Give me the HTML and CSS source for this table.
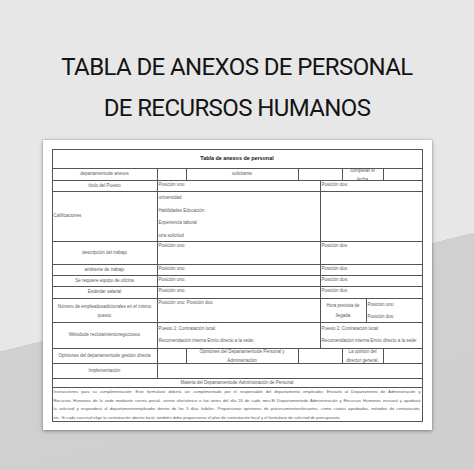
FILE: index.html
```html
<!DOCTYPE html>
<html lang="es">
<head>
<meta charset="utf-8">
<title>Tabla de anexos de personal</title>
<link rel="stylesheet" href="styles.css">
</head>
<body>
<header class="hero">
  <h1 class="hero-title">TABLA DE ANEXOS DE PERSONAL<br>DE RECURSOS HUMANOS</h1>
</header>
<main class="paper">
  <div class="sheet">
    <div class="cell span-8 sheet-title">Tabla de anexos de personal</div>

    <div class="cell">departamentode anexos</div>
    <div class="cell"></div>
    <div class="cell">solicitante</div>
    <div class="cell span-2"></div>
    <div class="cell span-2 tight">completar el<br>fecha</div>
    <div class="cell"></div>

    <div class="cell">título del Puesto</div>
    <div class="cell span-3 top">Posición uno:</div>
    <div class="cell span-4 top">Posición dos:</div>

    <div class="cell left">Calificaciones</div>
    <div class="cell span-3 list">
      <span>universidad</span>
      <span>Habilidades Educación</span>
      <span>Experiencia laboral</span>
      <span>otra solicitud</span>
    </div>
    <div class="cell span-4"></div>

    <div class="cell">descripción del trabajo</div>
    <div class="cell span-3 top">Posición uno:</div>
    <div class="cell span-4 top">Posición dos:</div>

    <div class="cell">ambiente de trabajo</div>
    <div class="cell span-3 top">Posición uno:</div>
    <div class="cell span-4 top">Posición dos:</div>

    <div class="cell">Se requiere equipo de oficina</div>
    <div class="cell span-3 top">Posición uno:</div>
    <div class="cell span-4 top">Posición dos:</div>

    <div class="cell">Estándar salarial</div>
    <div class="cell span-3 top">Posición uno:</div>
    <div class="cell span-4 top">Posición dos:</div>

    <div class="cell tight">Número de empleadosadicionales en el mismo<br>puesto</div>
    <div class="cell span-3 top">Posición uno: Posición dos:</div>
    <div class="cell span-2 mid">Hora prevista de<br>llegada</div>
    <div class="cell span-2 top lines">Posición uno:<br>Posición dos:</div>

    <div class="cell">Métodode reclutamientonegociosos</div>
    <div class="cell span-3 top lines">Puesto 1: Contratación local:<br>Recomendación interna Envío directo a la sede:</div>
    <div class="cell span-4 top lines">Puesto 2: Contratación local:<br>Recomendación interna Envío directo a la sede:</div>

    <div class="cell">Opiniones del departamentode gestión directa</div>
    <div class="cell"></div>
    <div class="cell tight">Opiniones del Departamentode Personal y<br>Administración</div>
    <div class="cell span-2"></div>
    <div class="cell span-2 tight">La opinión del<br>director general.</div>
    <div class="cell"></div>

    <div class="cell">Implementación</div>
    <div class="cell span-7"></div>

    <div class="cell span-8">Materia del Departamentode Administración de Personal</div>

    <div class="cell span-8 notes">
      <p class="note-line">Instrucciones para su cumplimentación: Este formulario deberá ser cumplimentado por el responsable del departamento empleador. Enviarlo al Departamento de Administración y</p>
      <p class="note-line">Recursos Humanos de la sede mediante correo postal, correo electrónico o fax antes del día 20 de cada mes.El Departamentode Administración y Recursos Humanos revisará y aprobará</p>
      <p class="note-line">la solicitud y responderá al departamentoempleador dentro de los 5 días hábiles. Proporcionar opiniones de procesamientorelevantes, como cuotas aprobadas, métodos de contratación,</p>
      <p class="note-line last">etc. Si cada sucursal elige la contratación abierta local, también debe proporcionar el plan de contratación local y el formulario de solicitud de presupuesto.</p>
    </div>
  </div>
</main>
</body>
</html>
```

FILE: styles.css
```css
html, body {
  margin: 0;
  padding: 0;
}

body {
  width: 474px;
  height: 470px;
  overflow: hidden;
  background: linear-gradient(165.9deg, #e7e7e7 0, #e7e7e7 341px, #d0d0d0 341px, #cfcfcf 100%);
  font-family: "Open Sans", "Liberation Sans", sans-serif;
}

.hero {
  padding-top: 47px;
  height: 82px;
  text-align: center;
}

.hero-title {
  margin: 0;
  font-family: Roboto, "Liberation Sans", sans-serif;
  font-weight: 400;
  font-size: 24px;
  line-height: 41px;
  letter-spacing: -0.6px;
  color: #141414;
}

.paper {
  width: 371px;
  margin: 11px auto 0;
  padding: 9px 9px 8px;
  background: #fff;
  box-shadow: 0 0 0 1px rgba(0, 0, 0, 0.06), 0 1px 4px rgba(0, 0, 0, 0.35);
}

.sheet {
  display: grid;
  grid-template-columns: 104px 28px 111px 21px 21px 23px 16px 38px;
  grid-template-rows: 18px 11px 10px 49px 22px 10px 10px 11px 23px 25px 14px 14px 8px 33px;
  gap: 1px;
  padding: 1px;
  background: #555;
  font-family: "Liberation Sans", Arial, sans-serif;
  font-size: 4.5px;
  line-height: 1;
  color: #5a5a5a;
}

.cell {
  background: #fff;
  display: flex;
  align-items: center;
  justify-content: center;
  text-align: center;
  padding: 0 1px;
  overflow: hidden;
  white-space: nowrap;
}

.span-2 { grid-column: span 2; }
.span-3 { grid-column: span 3; }
.span-4 { grid-column: span 4; }
.span-7 { grid-column: span 7; }
.span-8 { grid-column: span 8; }

.sheet-title {
  font-weight: 700;
  font-size: 5.4px;
  color: #111;
}

.left {
  justify-content: flex-start;
  text-align: left;
}

.top {
  align-items: flex-start;
  justify-content: flex-start;
  text-align: left;
  padding-top: 2px;
}

.lines {
  padding-top: 0;
  line-height: 12px;
}

.tight {
  line-height: 9px;
}

.mid {
  line-height: 10px;
}

.list {
  flex-direction: column;
  align-items: flex-start;
  justify-content: flex-start;
  text-align: left;
}

.list span {
  display: block;
  line-height: 12.5px;
}

.notes {
  display: block;
  padding: 0 1px;
  white-space: normal;
  font-size: 4.2px;
}

.note-line {
  margin: 0;
  line-height: 8.7px;
  text-align: justify;
  text-align-last: justify;
}

.note-line.last {
  text-align-last: left;
}
```
